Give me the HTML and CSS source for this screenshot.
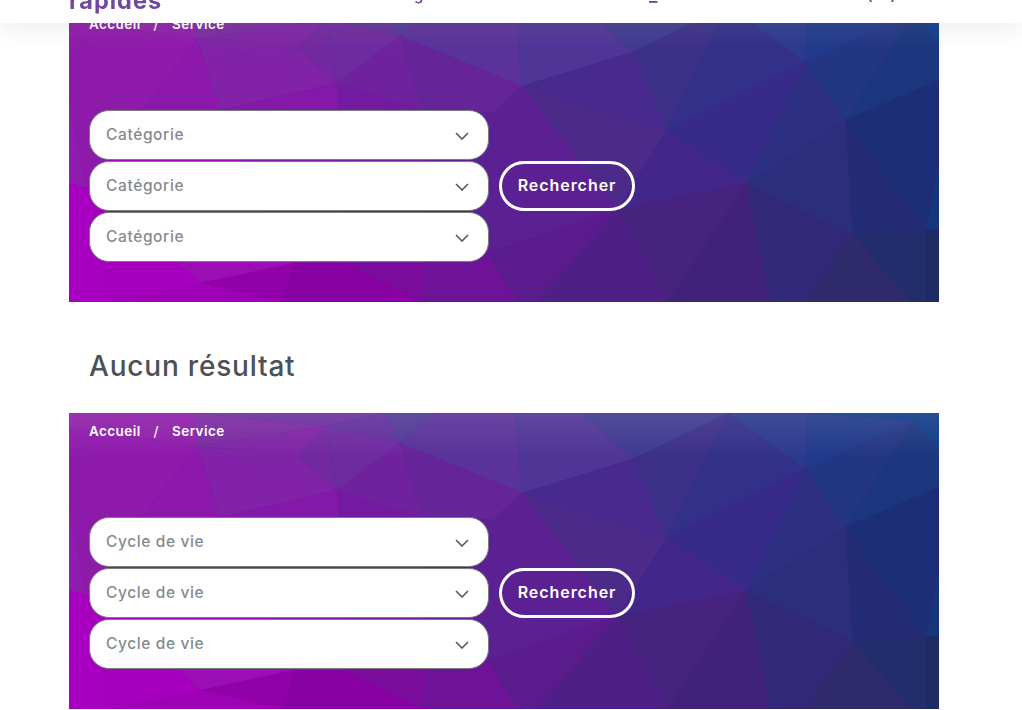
FILE: index.html
```html
<!DOCTYPE html>
<html lang="fr">
<head>
<meta charset="utf-8">
<title>Service</title>
<link rel="stylesheet" href="styles.css">
</head>
<body>
<svg class="defs" width="0" height="0" aria-hidden="true">
  <defs>
    <linearGradient id="base" x1="0" y1="1" x2="1" y2="0">
      <stop offset="0" stop-color="#a800c0"/>
      <stop offset=".5" stop-color="#5a2292"/>
      <stop offset="1" stop-color="#14377c"/>
    </linearGradient>
    <linearGradient id="sheen" x1="0" y1="0" x2="0" y2="1">
      <stop offset="0" stop-color="#fff" stop-opacity=".09"/>
      <stop offset="1" stop-color="#fff" stop-opacity="0"/>
    </linearGradient>
    <symbol id="mesh" viewBox="0 0 870 296" preserveAspectRatio="none">
      <rect width="870" height="296" fill="url(#base)"/>
      <polygon fill="#8f1fa9" points="0,0 125,0 128,33 0,15"/>
      <polygon fill="#7a2ba0" points="125,0 257,13 128,33"/>
      <polygon fill="#6c309f" points="125,0 316,0 257,13"/>
      <polygon fill="#7e24a5" points="128,33 257,13 228,43"/>
      <polygon fill="#72289f" points="257,13 268,77 228,43"/>
      <polygon fill="#6e2a9f" points="257,13 331,30 268,77"/>
      <polygon fill="#62309c" points="257,13 316,0 331,30"/>
      <polygon fill="#513a96" points="316,0 364,0 331,30"/>
      <polygon fill="#5a329a" points="364,0 446,0 453,80 331,30"/>
      <polygon fill="#4f3596" points="446,0 513,0 564,46 453,80"/>
      <polygon fill="#3f3a90" points="513,0 659,0 564,46"/>
      <polygon fill="#3c2f88" points="659,0 597,125 564,46"/>
      <polygon fill="#33308a" points="659,0 736,56 597,125"/>
      <polygon fill="#2c3a8e" points="659,0 739,0 736,56"/>
      <polygon fill="#223a8c" points="739,0 844,8 736,56"/>
      <polygon fill="#123c8a" points="739,0 870,0 870,38 844,8"/>
      <polygon fill="#233684" points="736,56 844,8 776,114"/>
      <polygon fill="#1b367f" points="844,8 870,38 870,74 776,114"/>
      <polygon fill="#1c2f76" points="776,114 870,74 870,163 857,223"/>
      <polygon fill="#14377c" points="870,163 870,223 857,223"/>
      <polygon fill="#1e2a64" points="857,223 870,223 870,296 857,296"/>
      <polygon fill="#2d2f82" points="736,56 776,114 677,177"/>
      <polygon fill="#382a88" points="597,125 736,56 677,177"/>
      <polygon fill="#252c76" points="776,114 857,223 783,228"/>
      <polygon fill="#2b2e7c" points="677,177 776,114 783,228"/>
      <polygon fill="#42268a" points="597,125 677,177 548,203"/>
      <polygon fill="#48298e" points="564,46 597,125 453,80"/>
      <polygon fill="#4c2a8a" points="453,80 597,125 548,203"/>
      <polygon fill="#45237f" points="548,203 677,177 598,296"/>
      <polygon fill="#40227a" points="677,177 701,296 598,296"/>
      <polygon fill="#4e1f84" points="548,203 598,296 468,296"/>
      <polygon fill="#312878" points="677,177 783,228 738,296 701,296"/>
      <polygon fill="#2e2a6c" points="783,228 841,296 738,296"/>
      <polygon fill="#222d6c" points="783,228 857,223 857,296 841,296"/>
      <polygon fill="#70229e" points="268,77 331,30 353,104"/>
      <polygon fill="#652498" points="331,30 453,80 424,107 353,104"/>
      <polygon fill="#5b2092" points="453,80 548,203 358,257 353,104 424,107"/>
      <polygon fill="#741aa0" points="268,77 353,104 358,257 277,257"/>
      <polygon fill="#8f1aab" points="0,15 128,33 73,104"/>
      <polygon fill="#8c18ac" points="128,33 152,104 73,104"/>
      <polygon fill="#7f24a6" points="128,33 228,43 268,77"/>
      <polygon fill="#8222a8" points="128,33 268,77 152,104"/>
      <polygon fill="#8418a8" points="152,104 268,77 277,257 225,257"/>
      <polygon fill="#8e1aaa" points="0,15 73,104 17,182 0,93"/>
      <polygon fill="#9a0eb4" points="73,104 152,104 225,257 132,277 17,182"/>
      <polygon fill="#8f1cac" points="0,93 17,182 0,177"/>
      <polygon fill="#a800c0" points="0,177 17,182 38,296 0,296"/>
      <polygon fill="#a600be" points="17,182 132,277 38,296"/>
      <polygon fill="#9e00b6" points="38,296 132,277 213,296"/>
      <polygon fill="#9200aa" points="132,277 225,257 213,296"/>
      <polygon fill="#8600a2" points="213,296 225,257 277,257 354,296"/>
      <polygon fill="#7a0c9c" points="277,257 358,257 354,296"/>
      <polygon fill="#6e1298" points="354,296 358,257 418,247 448,296"/>
      <polygon fill="#5a1c8c" points="418,247 548,203 468,296 448,296"/>
      <polygon fill="#5b2092" points="358,257 548,203 418,247"/>
      <rect width="870" height="45" fill="url(#sheen)"/>
    </symbol>
    <symbol id="chevron" viewBox="0 0 14 8">
      <path d="M1 1l6 6 6-6" fill="none" stroke="#4d5a6e" stroke-width="1.6"/>
    </symbol>
  </defs>
</svg>

<header class="topbar">
  <span class="brand">rapides</span>
  <span class="nav-item nav-a">g</span>
  <span class="nav-item nav-b">_</span>
  <span class="nav-item nav-c">( )</span>
</header>

<main class="page">
  <section class="hero">
    <svg class="hero-bg" aria-hidden="true"><use href="#mesh"/></svg>
    <div class="hero-body">
      <nav class="crumbs"><span>Accueil</span><span class="crumb-sep">/</span><span>Service</span></nav>
      <form class="search">
        <div class="fields">
          <div class="field"><span>Catégorie</span><svg class="chev"><use href="#chevron"/></svg></div>
          <div class="field"><span>Catégorie</span><svg class="chev"><use href="#chevron"/></svg></div>
          <div class="field"><span>Catégorie</span><svg class="chev"><use href="#chevron"/></svg></div>
        </div>
        <button class="go" type="button">Rechercher</button>
      </form>
    </div>
  </section>

  <h2 class="empty">Aucun résultat</h2>

  <section class="hero">
    <svg class="hero-bg" aria-hidden="true"><use href="#mesh"/></svg>
    <div class="hero-body">
      <nav class="crumbs"><span>Accueil</span><span class="crumb-sep">/</span><span>Service</span></nav>
      <form class="search">
        <div class="fields">
          <div class="field"><span>Cycle de vie</span><svg class="chev"><use href="#chevron"/></svg></div>
          <div class="field"><span>Cycle de vie</span><svg class="chev"><use href="#chevron"/></svg></div>
          <div class="field"><span>Cycle de vie</span><svg class="chev"><use href="#chevron"/></svg></div>
        </div>
        <button class="go" type="button">Rechercher</button>
      </form>
    </div>
  </section>
</main>
</body>
</html>
```

FILE: styles.css
```css
* { box-sizing: border-box; }
html, body { height: 710px; overflow: hidden; }
body {
  margin: 0;
  background: #fff;
  font-family: "Inter", "Liberation Sans", sans-serif;
}
.defs { display: block; height: 0; }

.topbar {
  position: fixed;
  top: 0; left: 0; right: 0;
  height: 23px;
  overflow: hidden;
  display: flex;
  align-items: flex-end;
  padding: 0 0 14px 69px;
  background: #fff;
  box-shadow: 0 4px 24px rgba(40, 50, 70, .1);
  color: #70489f;
  z-index: 5;
}
.brand { font-size: 23.5px; font-weight: 700; line-height: 16px; letter-spacing: 1px; width: 93px; white-space: nowrap; }
.nav-item { font-size: 15px; line-height: 16px; font-weight: 600; margin-bottom: 6px; }
.nav-a { margin-left: 252px; width: 12px; }
.nav-b { margin-left: 223px; width: 20px; font-size: 18px; }
.nav-c { margin-left: 198px; letter-spacing: 7px; }

.page { padding: 6px 0 0 69px; width: 939px; }

.hero { display: grid; width: 870px; height: 296px; }
.hero-bg, .hero-body { grid-area: 1 / 1; }
.hero-bg { width: 870px; height: 296px; display: block; }
.hero-body { padding: 11px 0 0 20px; color: #fff; }

.crumbs {
  display: flex;
  align-items: center;
  height: 14px;
  font-size: 13.5px;
  font-weight: 600;
  letter-spacing: .42px;
}
.crumb-sep { margin: 0 13px; font-weight: 500; }

.search { display: flex; align-items: center; gap: 10px; margin-top: 79px; }
.fields { display: flex; flex-direction: column; gap: 1px; width: 400px; }
.field {
  display: flex;
  align-items: center;
  justify-content: space-between;
  height: 50px;
  padding: 0 19px 2px 16px;
  background: #fff;
  border: 1px solid #7b7b80;
  border-radius: 20px;
  color: #858a90;
  font-size: 15.5px;
  font-weight: 500;
  letter-spacing: .62px;
}
.chev { width: 14px; height: 8px; margin-top: 3px; display: block; }

.go {
  width: 136px;
  height: 50px;
  padding: 0 0 2px;
  background: transparent;
  border: 3px solid #fff;
  border-radius: 25px;
  color: #fff;
  font-family: inherit;
  font-size: 16px;
  font-weight: 600;
  letter-spacing: .95px;
}

.empty {
  margin: 0;
  height: 111px;
  padding: 46px 0 0 20px;
  color: #4c5157;
  font-size: 28px;
  font-weight: 500;
  line-height: 36px;
  letter-spacing: .8px;
}
```
